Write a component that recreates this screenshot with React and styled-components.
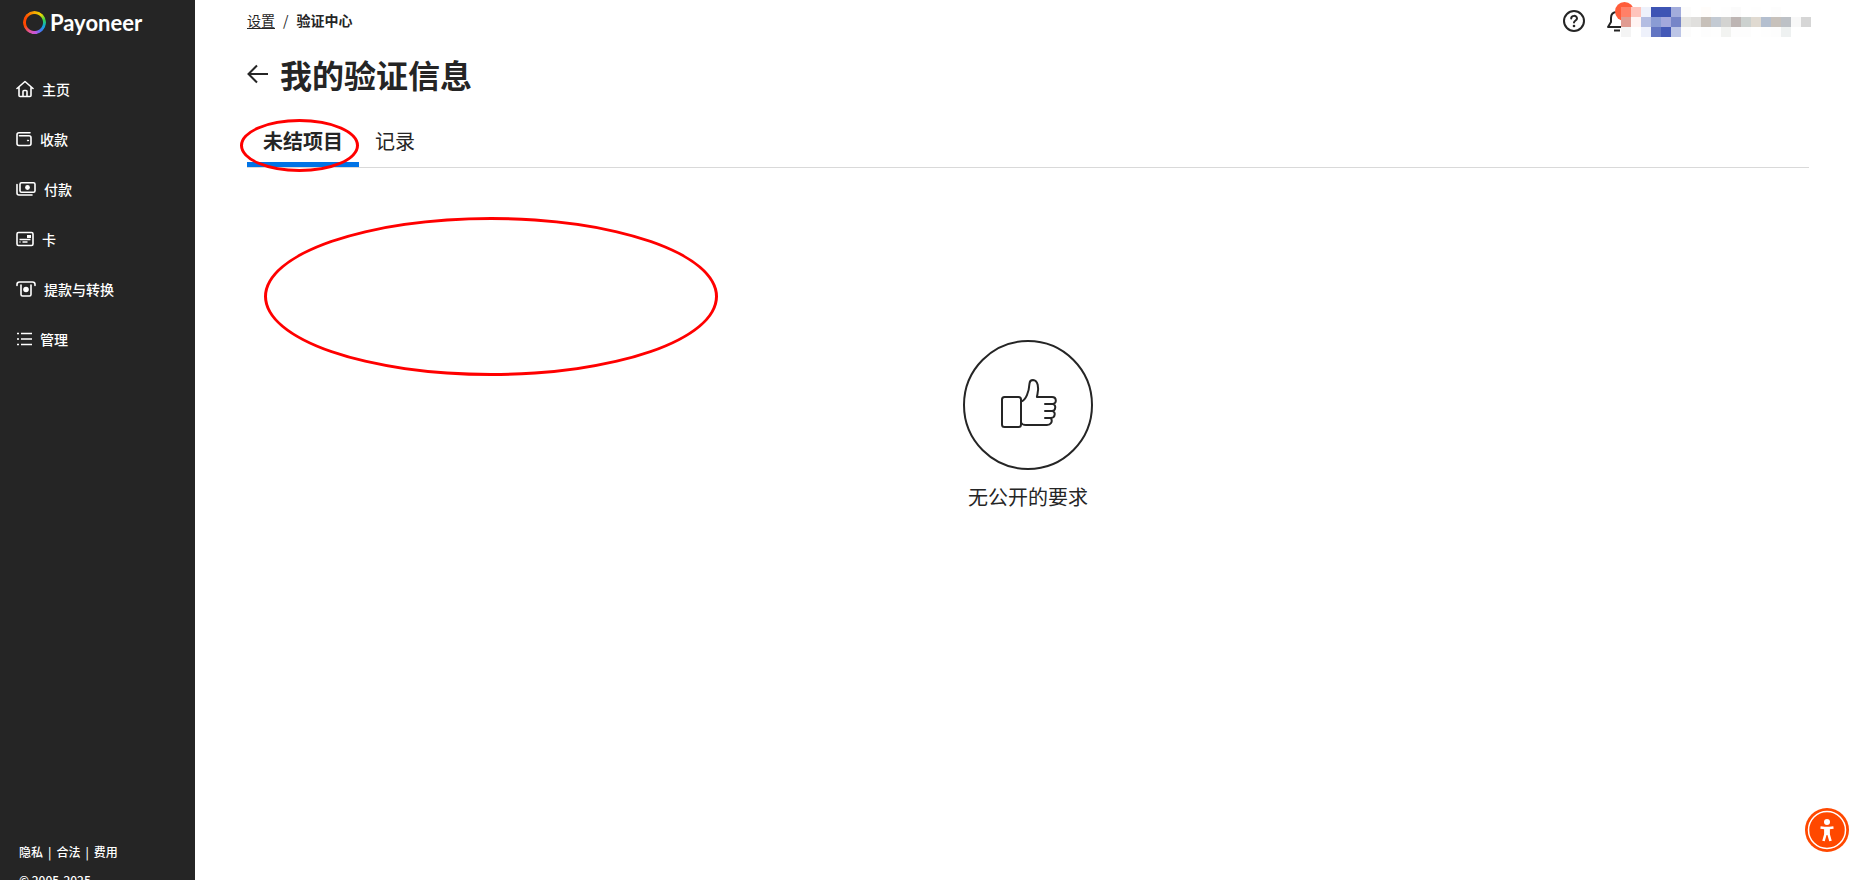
import React from "react";
import styled, { createGlobalStyle } from "styled-components";

const GlobalStyle = createGlobalStyle`
  * {
    box-sizing: border-box;
  }

  body {
    margin: 0;
    background: #ffffff;
    color: #252525;
    font-family: "Noto Sans CJK SC", "Noto Sans", sans-serif;
  }
`;

const Page = styled.div`
  display: flex;
  height: 100vh;
  overflow: hidden;
`;

const Sidebar = styled.aside`
  display: flex;
  flex-direction: column;
  flex-shrink: 0;
  width: 195px;
  background: #252525;
  color: #ffffff;
`;

const Logo = styled.a`
  display: flex;
  align-items: center;
  gap: 4px;
  height: 44px;
  padding-left: 23px;
  color: #ffffff;
  font-family: Lato, sans-serif;
  font-size: 22px;
  font-weight: 700;
  text-decoration: none;
`;

const Ring = styled.span`
  width: 23px;
  height: 23px;
  border-radius: 50%;
  background: conic-gradient(
    #f5a800,
    #e8d800 40deg,
    #35d34a 75deg,
    #0fa8d8 110deg,
    #3d7bf0 140deg,
    #c455e0 175deg,
    #e0559a 210deg,
    #ff4800 250deg,
    #ff4800 300deg,
    #f5a800
  );
  mask: radial-gradient(circle, transparent 8px, #000 9px);
`;

const Nav = styled.nav`
  display: flex;
  flex-direction: column;
  flex-grow: 1;
  padding-top: 20px;
`;

const NavItem = styled.a`
  display: flex;
  align-items: center;
  gap: 8px;
  height: 50px;
  padding-left: 16px;
  color: #ffffff;
  font-size: 14px;
  font-weight: 500;
  text-decoration: none;
`;

const Footer = styled.footer`
  height: 40px;
  padding-left: 19px;
  font-size: 12px;
  font-weight: 500;
  line-height: 24px;
  white-space: nowrap;
`;

const FooterLinks = styled.div`
  display: flex;
  gap: 5px;
  margin-bottom: 4px;
`;

const FooterLink = styled.a`
  color: #ffffff;
  text-decoration: none;
`;

const Main = styled.main`
  flex-grow: 1;
  padding: 0 42px 0 52px;
`;

const TopBar = styled.header`
  display: flex;
  align-items: center;
  justify-content: space-between;
  height: 42px;
`;

const Breadcrumb = styled.nav`
  display: flex;
  gap: 8px;
  padding-bottom: 2px;
  font-size: 14px;
  line-height: 20px;
`;

const Crumb = styled.a`
  color: #252525;
  text-decoration: underline;
  text-underline-offset: 2px;
`;

const Current = styled.span`
  font-weight: 700;
`;

const Actions = styled.div`
  position: relative;
  display: flex;
  align-items: center;
  gap: 20px;
  width: 247px;
`;

const IconButton = styled.button`
  display: flex;
  padding: 0;
  border: 0;
  background: none;
  color: #252525;
  cursor: pointer;
`;

const Badge = styled.span`
  position: absolute;
  top: -7px;
  left: 53px;
  width: 19px;
  height: 19px;
  border-radius: 50%;
  background: #ff5c3a;
`;

const Mosaic = styled.svg`
  position: absolute;
  top: -9px;
  left: 59px;
`;

const Heading = styled.div`
  display: flex;
  align-items: center;
  gap: 12px;
  height: 64px;
`;

const Title = styled.h1`
  margin: 0;
  font-size: 32px;
  font-weight: 700;
  line-height: 48px;
`;

const Tabs = styled.div`
  position: relative;
  display: flex;
  height: 62px;
  border-bottom: 1px solid #d9d9d9;
`;

const Tab = styled.button`
  height: 61px;
  padding: 12px 16px 0;
  border: 0;
  border-bottom: 5px solid ${({ $active }) => ($active ? "#0073e6" : "transparent")};
  background: none;
  color: #252525;
  font-family: inherit;
  font-size: 20px;
  font-weight: ${({ $active }) => ($active ? 700 : 400)};
  cursor: pointer;
`;

const Panel = styled.section`
  position: relative;
  display: flex;
  flex-direction: column;
  align-items: center;
  padding-top: 172px;
`;

const EmptyIcon = styled.div`
  display: flex;
  align-items: center;
  justify-content: center;
  width: 130px;
  height: 130px;
  border: 2px solid #252525;
  border-radius: 50%;
`;

const EmptyText = styled.p`
  margin: 12px 0 0;
  font-size: 20px;
  line-height: 30px;
`;

const Marker = styled.span`
  position: absolute;
  top: ${({ $top }) => $top}px;
  left: ${({ $left }) => $left}px;
  width: ${({ $width }) => $width}px;
  height: ${({ $height }) => $height}px;
  border: 3px solid #ff0000;
  border-radius: 50%;
  pointer-events: none;
`;

const Accessibility = styled.button`
  position: fixed;
  right: 2px;
  bottom: 28px;
  display: flex;
  padding: 0;
  border: 0;
  background: none;
  cursor: pointer;
`;

const Stroke = ({ width, height = 18, children }) => (
  <svg
    width={width}
    height={height}
    viewBox={`0 0 ${width} ${height}`}
    fill="none"
    stroke="currentColor"
    strokeWidth="1.6"
    strokeLinecap="round"
    strokeLinejoin="round"
    aria-hidden="true"
  >
    {children}
  </svg>
);

const HomeIcon = () => (
  <Stroke width={18}>
    <path d="M1 8.5 9 1.5l8 7M3 7v8.5q0 1 1 1h10q1 0 1-1V7M7 16.5v-5q0-1 1-1h2q1 0 1 1v5" />
  </Stroke>
);

const WalletIcon = () => (
  <Stroke width={16}>
    <path d="M14 2.8H3Q1 2.8 1 4.800v8.700q0 2 2 2h10q2 0 2-2V7.800q0-2-2-2H3.500" />
    <circle cx="12" cy="10.500" r=".6" fill="currentColor" strokeWidth="1" />
  </Stroke>
);

const PayIcon = () => (
  <Stroke width={20}>
    <rect x="4" y="2.800" width="15" height="9.500" rx="1.500" />
    <path d="M1 4.500v8.500q0 2 2 2h13" />
    <circle cx="11.500" cy="7.500" r="2.400" fill="currentColor" stroke="none" />
  </Stroke>
);

const CardIcon = () => (
  <Stroke width={18}>
    <rect x="1" y="2.500" width="16" height="13" rx="1.500" />
    <path d="M3.500 9.500h11M3.500 12h1M6.500 12h5" strokeLinecap="butt" />
    <path d="M11 5h4v3h-4z" fill="currentColor" stroke="none" />
  </Stroke>
);

const WithdrawIcon = () => (
  <Stroke width={20}>
    <path d="M1 5.500v-1q0-2.500 2.500-2.500h13q2.500 0 2.500 2.500v1M5 5v9.500q0 1.500 1.500 1.500h7q1.500 0 1.500-1.500V5" />
    <circle cx="10" cy="9.500" r="2.800" fill="currentColor" stroke="none" />
  </Stroke>
);

const ListIcon = () => (
  <Stroke width={16}>
    <path d="M1 3.500h2M1 9h2M1 14.500h2M5 3.500h11M5 9h11M5 14.500h11" strokeLinecap="butt" />
  </Stroke>
);

const ArrowIcon = () => (
  <svg width="21" height="20" viewBox="0 0 21 20" fill="none" stroke="currentColor" strokeWidth="2" aria-hidden="true">
    <path d="M21 10H2M10 1.500 1.500 10l8.500 8.500" />
  </svg>
);

const HelpIcon = () => (
  <svg width="24" height="24" viewBox="0 0 24 24" fill="none" stroke="currentColor" strokeWidth="2" strokeLinecap="round" aria-hidden="true">
    <circle cx="12" cy="12" r="10" />
    <path d="M9.200 9.600C9.200 6 15 6 15 9.400c0 2-3 2.100-3 4.200" />
    <circle cx="12" cy="17" r="1.300" fill="currentColor" stroke="none" />
  </svg>
);

const BellIcon = () => (
  <svg width="22" height="24" viewBox="0 0 22 24" fill="none" stroke="currentColor" strokeWidth="2" strokeLinejoin="round" aria-hidden="true">
    <path d="M11 3Q5 3 5 9v4L2 18h18l-3-5V9q0-6-6-6Z" />
    <path d="M8 21.500h6" />
  </svg>
);

const ThumbIcon = () => (
  <svg width="58" height="54" viewBox="-1 0 58 54" fill="none" stroke="currentColor" strokeWidth="2" strokeLinecap="round" strokeLinejoin="round" aria-hidden="true">
    <rect x="2" y="19" width="19" height="30" rx="2.500" />
    <path d="M21 23.500c5-1 8-10 8.500-18q.3-3.500 3.500-3.500c5 .3 6 8 4.500 14l-.6 3H52c5 0 5 7 .5 7H45M52.500 26c4 0 3.500 7-.5 7h-7M52 33c4 0 3.500 7-1 7h-6M51 40c2 4-.5 7-4 7H26q-4 0-5-2.500" />
  </svg>
);

const PersonIcon = () => (
  <svg width="44" height="44" viewBox="0 0 44 44" aria-hidden="true">
    <circle cx="22" cy="22" r="22" fill="#ff4800" />
    <circle cx="22" cy="22" r="18.500" fill="none" stroke="#ffffff" strokeWidth="1.500" />
    <circle cx="22" cy="14" r="3" fill="#ffffff" />
    <path d="M15.500 19.500 19.500 20h5l4-.5M20.500 20v6l-2 7M23.500 20v6l2 7" fill="none" stroke="#ffffff" strokeWidth="2.600" />
    <path d="M19.500 19h5v8h-5z" fill="#ffffff" />
  </svg>
);

const navItems = [
  { label: "主页", Icon: HomeIcon },
  { label: "收款", Icon: WalletIcon },
  { label: "付款", Icon: PayIcon },
  { label: "卡", Icon: CardIcon },
  { label: "提款与转换", Icon: WithdrawIcon },
  { label: "管理", Icon: ListIcon },
];

// rows of 10px tiles over the account name
const tiles = [
  ["#ff8068", "#ffc4bc", "#eef1fb", "#3d54b4", "#3d54b4", "#a2acdc", "#fcfcfc", "#ffffff", "#fffdfb", "#ffffff", "#fefefe", "#fbfbfb", "#ffffff", "#fefefe", "#ffffff", "#fdfdfd"],
  ["#e09c92", "#fff4f3", "#b4bde2", "#8a9cd4", "#a3a8dc", "#7685c8", "#e5e5e3", "#e0dfdd", "#c7c0b9", "#c3cad3", "#d3d3d1", "#bdb5b3", "#ccd1cf", "#e0dad1", "#b4bfcf", "#c7c1bb", "#bdc1c6", "#f8f8f8", "#d6d6d6"],
  ["#f4f4f4", "#ffffff", "#eef1fb", "#6275c2", "#4459b7", "#bcc5e6", "#fcfcfc", "#ffffff", "#fdfdfd", "#fefefe", "#f2f3f1", "#fdfdfd", "#fdfdfd", "#ffffff", "#fefefe", "#fdfdfd", "#eef1f1"],
];

const App = () => {
  return (
    <>
      <GlobalStyle />
      <Page>
        <Sidebar>
          <Logo href="#">
            <Ring />
            Payoneer
          </Logo>
          <Nav>
            {navItems.map(({ label, Icon }) => (
              <NavItem href="#" key={label}>
                <Icon />
                {label}
              </NavItem>
            ))}
          </Nav>
          <Footer>
            <FooterLinks>
              <FooterLink href="#">隐私</FooterLink>|
              <FooterLink href="#">合法</FooterLink>|
              <FooterLink href="#">费用</FooterLink>
            </FooterLinks>
            © 2005-2025
          </Footer>
        </Sidebar>

        <Main>
          <TopBar>
            <Breadcrumb>
              <Crumb href="#">设置</Crumb>
              <span>/</span>
              <Current>验证中心</Current>
            </Breadcrumb>
            <Actions>
              <IconButton aria-label="帮助">
                <HelpIcon />
              </IconButton>
              <IconButton aria-label="通知">
                <BellIcon />
              </IconButton>
              <Badge />
              <Mosaic width="190" height="40" shapeRendering="crispEdges" aria-hidden="true">
                {tiles.map((row, y) =>
                  row.map((fill, x) => (
                    <rect key={`${x}-${y}`} x={x * 10} y={y * 10 + 7} width="10" height="10" fill={fill} />
                  ))
                )}
              </Mosaic>
            </Actions>
          </TopBar>

          <Heading>
            <IconButton aria-label="返回">
              <ArrowIcon />
            </IconButton>
            <Title>我的验证信息</Title>
          </Heading>

          <Tabs role="tablist">
            <Tab role="tab" aria-selected="true" $active>
              未结项目
            </Tab>
            <Tab role="tab" aria-selected="false">
              记录
            </Tab>
            <Marker $top={13} $left={-7} $width={119} $height={53} />
          </Tabs>

          <Panel>
            <Marker $top={49} $left={17} $width={454} $height={159} />
            <EmptyIcon>
              <ThumbIcon />
            </EmptyIcon>
            <EmptyText>无公开的要求</EmptyText>
          </Panel>
        </Main>
      </Page>

      <Accessibility aria-label="辅助功能">
        <PersonIcon />
      </Accessibility>
    </>
  );
};

export default App;
